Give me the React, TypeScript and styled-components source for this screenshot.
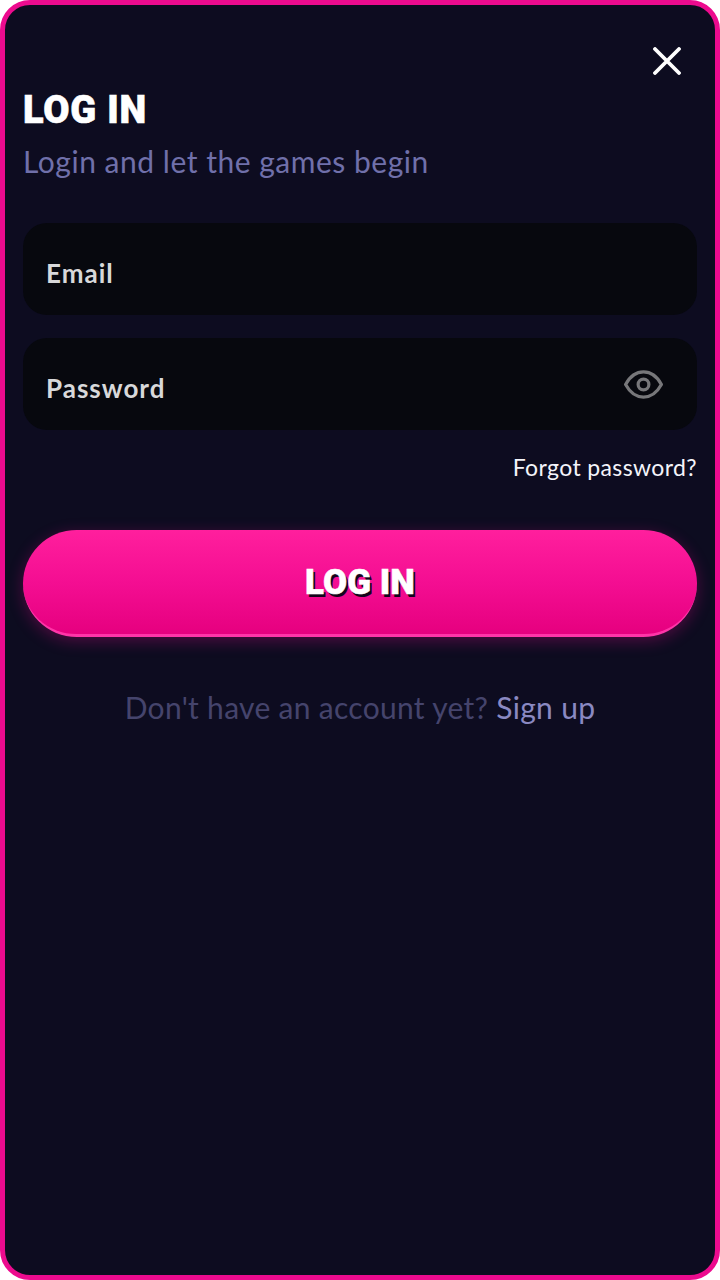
import React from "react";
import styled, { createGlobalStyle } from "styled-components";

const Global = createGlobalStyle`
  html, body { margin: 0; padding: 0; background: #fff; }
  * { box-sizing: border-box; }
`;

const Modal = styled.div`
  position: relative;
  width: 720px;
  height: 1280px;
  background: #0d0c20;
  border: 5px solid #ec0b8e;
  border-radius: 30px;
  padding: 85px 18px 0;
  display: flex;
  flex-direction: column;
  font-family: "Lato", "Noto Sans", sans-serif;
`;

const Close = styled.button`
  position: absolute;
  top: 42px;
  right: 34px;
  width: 28px;
  height: 28px;
  padding: 0;
  border: 0;
  background: none;
  color: #fff;
  display: block;
`;

const Title = styled.h1`
  margin: 0;
  font-family: "Roboto", sans-serif;
  font-weight: 900;
  font-size: 38px;
  line-height: 40px;
  letter-spacing: 0.8px;
  -webkit-text-stroke: 0.6px #fff;
  color: #fff;
`;

const Subtitle = styled.p`
  margin: 13px 0 0;
  font-size: 30px;
  line-height: 36px;
  font-weight: 400;
  letter-spacing: 0.52px;
  color: #7070aa;
`;

const Fields = styled.div`
  margin-top: 44px;
  display: flex;
  flex-direction: column;
  gap: 23px;
`;

const Field = styled.div`
  height: 92px;
  border-radius: 24px;
  background: #07080e;
  padding: 0 32px 0 24px;
  display: flex;
  align-items: center;
  justify-content: space-between;
`;

const Label = styled.span`
  margin-left: -1px;
  padding-top: 7px;
  font-size: 26px;
  font-weight: 700;
  letter-spacing: 1px;
  color: #d8d8da;
`;

const Eye = styled.svg`
  width: 43px;
  height: 43px;
  color: #77777a;
`;

const Forgot = styled.a`
  align-self: flex-end;
  margin-top: 22px;
  font-size: 23px;
  line-height: 30px;
  letter-spacing: 0.38px;
  color: #f4f4fa;
`;

const Submit = styled.button`
  margin-top: 48px;
  height: 107px;
  border: 0;
  border-bottom: 3px solid #ff35a8;
  border-radius: 54px;
  background: linear-gradient(180deg, #ff1f9d 0%, #f40e92 50%, #e6007f 100%);
  box-shadow: 0 4px 16px rgba(236, 11, 142, 0.3);
  font-family: "Roboto", sans-serif;
  font-weight: 900;
  font-size: 35px;
  -webkit-text-stroke: 0.5px #fff;
  color: #fff;
  text-shadow: 2px 3px 0 #14051a;
`;

const Footer = styled.p`
  margin: 51px 0 0;
  text-align: center;
  font-size: 30px;
  line-height: 38px;
  letter-spacing: 0.3px;
  color: #45446c;
`;

const SignUp = styled.a`
  color: #8a89c2;
`;

export default function App() {
  return (
    <>
      <Global />
      <Modal>
        <Close aria-label="Close">
          <svg viewBox="0 0 28 28" width="28" height="28" fill="none" stroke="currentColor" strokeWidth="3.8" strokeLinecap="round">
            <path d="M2 2 L26 26 M26 2 L2 26" />
          </svg>
        </Close>
        <Title>LOG IN</Title>
        <Subtitle>Login and let the games begin</Subtitle>
        <Fields>
          <Field><Label>Email</Label></Field>
          <Field>
            <Label>Password</Label>
            <Eye viewBox="0 0 24 24" fill="none" stroke="currentColor" strokeWidth="1.8" strokeLinecap="round" strokeLinejoin="round">
              <path d="M2 12 C5 6.5 8.5 5 12 5 C15.5 5 19 6.5 22 12 C19 17.5 15.5 19 12 19 C8.5 19 5 17.5 2 12 Z" />
              <circle cx="12" cy="12" r="3" />
            </Eye>
          </Field>
        </Fields>
        <Forgot>Forgot password?</Forgot>
        <Submit>LOG IN</Submit>
        <Footer>Don't have an account yet? <SignUp>Sign up</SignUp></Footer>
      </Modal>
    </>
  );
}
